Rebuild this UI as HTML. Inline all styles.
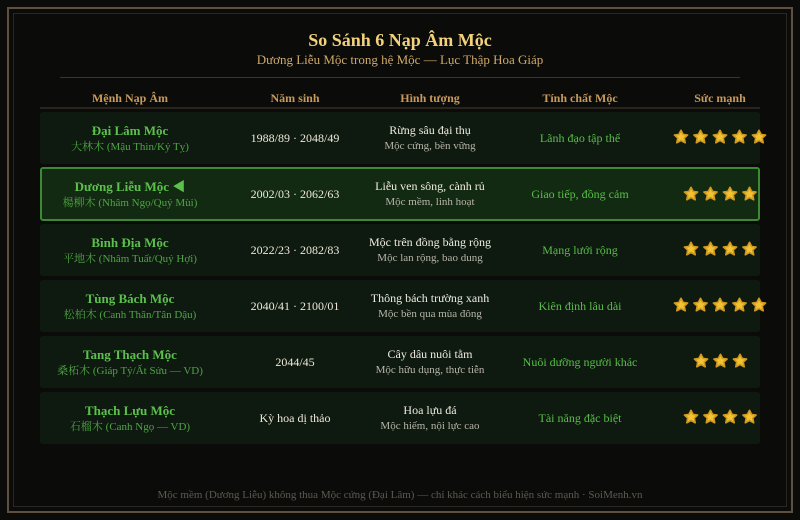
<!DOCTYPE html>
<html><head><meta charset="utf-8"><style>
*{margin:0;padding:0;box-sizing:border-box}
body{width:800px;height:520px;background:#0b0b0a;font-family:"Liberation Serif","Noto Serif CJK SC",serif;position:relative;overflow:hidden}
.f1{position:absolute;left:7px;top:7px;width:786px;height:506px;border:2px solid #5e5040}
.f2{position:absolute;left:13px;top:13px;width:774px;height:494px;border:1px solid #2a2620}
h1{position:absolute;top:30px;left:0;width:800px;text-align:center;color:#f2d27a;font-size:18px;font-weight:bold}
.sub{position:absolute;top:52px;left:0;width:800px;text-align:center;color:#cfa968;font-size:13px}
.hr{position:absolute;left:60px;top:77px;width:680px;height:1px;background:#3d3528}
.hd{position:absolute;top:91px;font-size:12px;font-weight:bold;color:#c89a5c;text-align:center}
.hline{position:absolute;left:40px;top:107px;width:720px;height:2px;background:#2a241c}
.row{position:absolute;left:40px;width:720px;height:52px;background:#0e1a10;border-radius:3px}
.row.hl{background:#132a12;border:2px solid #3d8a35;border-radius:3px}
.c{position:absolute;text-align:center;top:0;height:100%;display:flex;flex-direction:column;justify-content:center}
.n{color:#5cc04c;font-weight:bold;font-size:13px;line-height:17px}
.nc{color:#4fa444;font-size:11px;line-height:16px}
.y{color:#eee8d8;font-size:12px}
.i1{color:#f0ece0;font-size:12px;line-height:17px}
.i2{color:#b8b4a8;font-size:11px;line-height:15px}
.p{color:#58be48;font-size:12px}
.st{position:absolute;top:17px;height:16px}
.ft{position:absolute;top:489px;left:0;width:800px;text-align:center;color:#5e5a50;font-size:11px}
</style></head><body>
<div class="f1"></div><div class="f2"></div>
<h1>So Sánh 6 Nạp Âm Mộc</h1>
<div class="sub">Dương Liễu Mộc trong hệ Mộc — Lục Thập Hoa Giáp</div>
<div class="hr"></div>
<div class="hd" style="left:40px;width:180px">Mệnh Nạp Âm</div>
<div class="hd" style="left:235px;width:120px">Năm sinh</div>
<div class="hd" style="left:360px;width:140px">Hình tượng</div>
<div class="hd" style="left:510px;width:140px">Tính chất Mộc</div>
<div class="hd" style="left:660px;width:120px">Sức mạnh</div>
<div class="hline"></div>
<svg width="0" height="0" style="position:absolute"><defs><symbol id="s" viewBox="0 0 16 16"><path d="M8 1.3 L10.1 5.4 L14.6 6 L11.3 9.1 L12.2 13.8 L8 11.5 L3.8 13.8 L4.7 9.1 L1.4 6 L5.9 5.4 Z" fill="#f2c232" stroke="#d09a1e" stroke-width="1.6" stroke-linejoin="round"/></symbol></defs></svg>

<div class="row" style="top:112px">
<div class="c" style="left:0;width:180px"><div class="n">Đại Lâm Mộc</div><div class="nc">大林木 (Mậu Thìn/Kỷ Tỵ)</div></div>
<div class="c y" style="left:195px;width:120px">1988/89 · 2048/49</div>
<div class="c" style="left:320px;width:140px"><div class="i1">Rừng sâu đại thụ</div><div class="i2">Mộc cứng, bền vững</div></div>
<div class="c p" style="left:470px;width:140px">Lãnh đạo tập thể</div>
<svg class="st" style="left:633px" width="96" viewBox="0 0 96 16"><use href="#s" x="0" width="16" height="16"/><use href="#s" x="19.5" width="16" height="16"/><use href="#s" x="39" width="16" height="16"/><use href="#s" x="58.5" width="16" height="16"/><use href="#s" x="78" width="16" height="16"/></svg>
</div>

<div class="row hl" style="top:167px;height:54px">
<div class="c" style="left:-2px;width:180px"><div class="n">Dương Liễu Mộc ◀</div><div class="nc">楊柳木 (Nhâm Ngọ/Quý Mùi)</div></div>
<div class="c y" style="left:193px;width:120px">2002/03 · 2062/63</div>
<div class="c" style="left:318px;width:140px"><div class="i1">Liễu ven sông, cành rủ</div><div class="i2">Mộc mềm, linh hoạt</div></div>
<div class="c p" style="left:468px;width:140px">Giao tiếp, đồng cảm</div>
<svg class="st" style="left:641px" width="76" viewBox="0 0 76 16"><use href="#s" x="0" width="16" height="16"/><use href="#s" x="19.5" width="16" height="16"/><use href="#s" x="39" width="16" height="16"/><use href="#s" x="58.5" width="16" height="16"/></svg>
</div>

<div class="row" style="top:224px">
<div class="c" style="left:0;width:180px"><div class="n">Bình Địa Mộc</div><div class="nc">平地木 (Nhâm Tuất/Quý Hợi)</div></div>
<div class="c y" style="left:195px;width:120px">2022/23 · 2082/83</div>
<div class="c" style="left:320px;width:140px"><div class="i1">Mộc trên đồng bằng rộng</div><div class="i2">Mộc lan rộng, bao dung</div></div>
<div class="c p" style="left:470px;width:140px">Mạng lưới rộng</div>
<svg class="st" style="left:643px" width="76" viewBox="0 0 76 16"><use href="#s" x="0" width="16" height="16"/><use href="#s" x="19.5" width="16" height="16"/><use href="#s" x="39" width="16" height="16"/><use href="#s" x="58.5" width="16" height="16"/></svg>
</div>

<div class="row" style="top:280px">
<div class="c" style="left:0;width:180px"><div class="n">Tùng Bách Mộc</div><div class="nc">松柏木 (Canh Thân/Tân Dậu)</div></div>
<div class="c y" style="left:195px;width:120px">2040/41 · 2100/01</div>
<div class="c" style="left:320px;width:140px"><div class="i1">Thông bách trường xanh</div><div class="i2">Mộc bền qua mùa đông</div></div>
<div class="c p" style="left:470px;width:140px">Kiên định lâu dài</div>
<svg class="st" style="left:633px" width="96" viewBox="0 0 96 16"><use href="#s" x="0" width="16" height="16"/><use href="#s" x="19.5" width="16" height="16"/><use href="#s" x="39" width="16" height="16"/><use href="#s" x="58.5" width="16" height="16"/><use href="#s" x="78" width="16" height="16"/></svg>
</div>

<div class="row" style="top:336px">
<div class="c" style="left:0;width:180px"><div class="n">Tang Thạch Mộc</div><div class="nc">桑柘木 (Giáp Tý/Ất Sửu — VD)</div></div>
<div class="c y" style="left:195px;width:120px">2044/45</div>
<div class="c" style="left:320px;width:140px"><div class="i1">Cây dâu nuôi tằm</div><div class="i2">Mộc hữu dụng, thực tiễn</div></div>
<div class="c p" style="left:470px;width:140px">Nuôi dưỡng người khác</div>
<svg class="st" style="left:653px" width="56" viewBox="0 0 56 16"><use href="#s" x="0" width="16" height="16"/><use href="#s" x="19.5" width="16" height="16"/><use href="#s" x="39" width="16" height="16"/></svg>
</div>

<div class="row" style="top:392px">
<div class="c" style="left:0;width:180px"><div class="n">Thạch Lựu Mộc</div><div class="nc">石榴木 (Canh Ngọ — VD)</div></div>
<div class="c y" style="left:195px;width:120px">Kỳ hoa dị thảo</div>
<div class="c" style="left:320px;width:140px"><div class="i1">Hoa lựu đá</div><div class="i2">Mộc hiếm, nội lực cao</div></div>
<div class="c p" style="left:470px;width:140px">Tài năng đặc biệt</div>
<svg class="st" style="left:643px" width="76" viewBox="0 0 76 16"><use href="#s" x="0" width="16" height="16"/><use href="#s" x="19.5" width="16" height="16"/><use href="#s" x="39" width="16" height="16"/><use href="#s" x="58.5" width="16" height="16"/></svg>
</div>

<div class="ft">Mộc mềm (Dương Liễu) không thua Mộc cứng (Đại Lâm) — chỉ khác cách biểu hiện sức mạnh · SoiMenh.vn</div>
</body></html>
